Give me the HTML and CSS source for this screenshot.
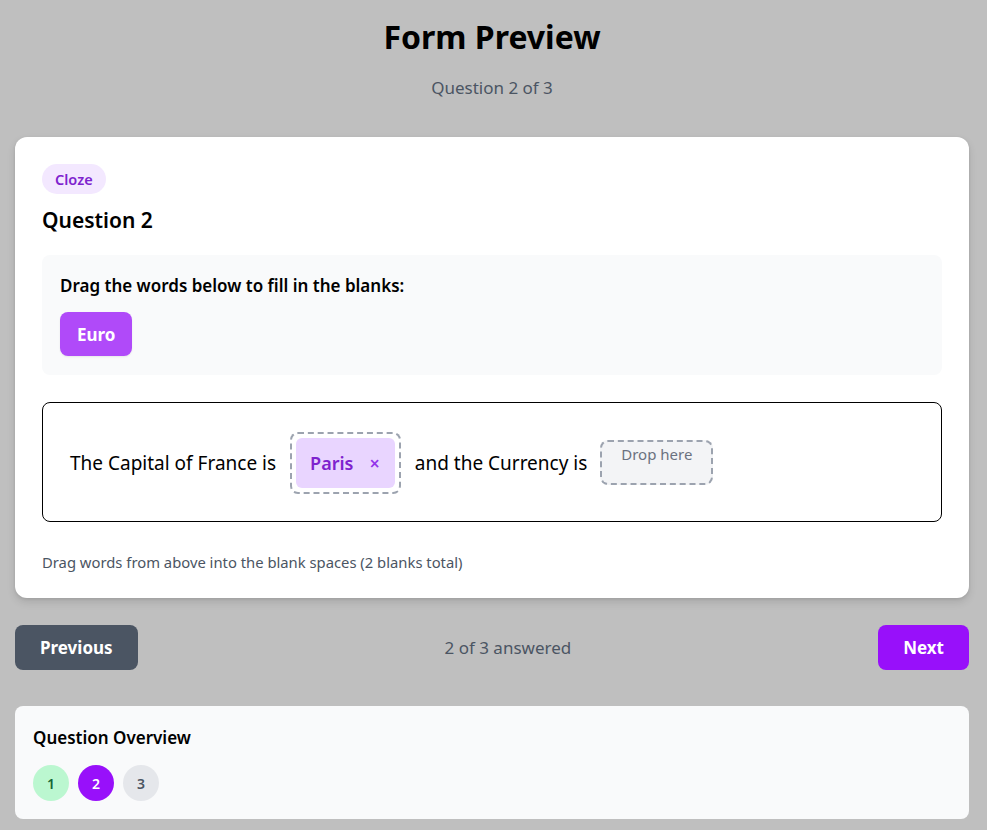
FILE: index.html
```html
<!DOCTYPE html>
<html>
<head>
<meta charset="utf-8">
<link rel="stylesheet" href="styles.css">
</head>
<body>
<div class="page">
  <header class="head">
    <h1 class="title">Form Preview</h1>
    <p class="subtitle">Question 2 of 3</p>
  </header>

  <section class="card">
    <span class="badge">Cloze</span>
    <h2 class="qtitle">Question 2</h2>

    <div class="bank">
      <p class="bank-label">Drag the words below to fill in the blanks:</p>
      <div class="bank-words">
        <span class="word">Euro</span>
      </div>
    </div>

    <div class="sentence">
      <span class="txt">The Capital of France is</span>
      <span class="blank filled"><span class="chip">Paris<span class="x">×</span></span></span>
      <span class="txt">and the Currency is</span>
      <span class="blank empty">Drop here</span>
    </div>

    <p class="hint">Drag words from above into the blank spaces (2 blanks total)</p>
  </section>

  <nav class="nav">
    <button class="btn prev">Previous</button>
    <span class="progress">2 of 3 answered</span>
    <button class="btn next">Next</button>
  </nav>

  <section class="overview">
    <h3 class="ov-title">Question Overview</h3>
    <div class="dots">
      <span class="dot done">1</span>
      <span class="dot current">2</span>
      <span class="dot todo">3</span>
    </div>
  </section>
</div>
</body>
</html>
```

FILE: styles.css
```css
* { box-sizing: border-box; }
html, body { margin: 0; padding: 0; }
body {
  background: #bfbfbf;
  font-family: "Noto Sans", "Open Sans", sans-serif;
  color: #000;
}
.page {
  padding: 0 18px 0 15px;
}
.head {
  text-align: center;
  padding-top: 16px;
}
.title {
  margin: 0;
  font-size: 32px;
  font-weight: 700;
  line-height: 42px;
}
.subtitle {
  margin: 18px 0 0;
  font-size: 17px;
  line-height: 24px;
  color: #4b5563;
}
.card {
  margin-top: 37px;
  background: #fff;
  border-radius: 12px;
  box-shadow: 0 4px 8px rgba(0,0,0,0.12), 0 1px 3px rgba(0,0,0,0.08);
  padding: 27px 27px 26px;
}
.badge {
  display: inline-block;
  background: #f3e8ff;
  color: #7e22ce;
  font-size: 14.5px;
  font-weight: 600;
  line-height: 30px;
  height: 30px;
  padding: 0 13px;
  border-radius: 15px;
}
.qtitle {
  margin: 12px 0 0;
  font-size: 21px;
  font-weight: 600;
  line-height: 28px;
}
.bank {
  margin-top: 21px;
  background: #f9fafb;
  border-radius: 8px;
  padding: 19px 18px 19px;
}
.bank-label {
  margin: 0;
  font-size: 17px;
  font-weight: 600;
  line-height: 24px;
}
.bank-words {
  margin-top: 14px;
  display: flex;
  gap: 8px;
}
.word {
  display: inline-flex;
  align-items: center;
  height: 44px;
  padding: 0 17px;
  background: #b04af9;
  color: #fff;
  border-radius: 8px;
  font-size: 17px;
  font-weight: 700;
  box-shadow: 0 1px 2px rgba(0,0,0,0.08);
}
.sentence {
  margin-top: 27px;
  border: 1px solid #000;
  border-radius: 8px;
  height: 120px;
  padding: 1px 27px 0;
  display: flex;
  align-items: center;
  gap: 14px;
  font-size: 19px;
}
.txt { line-height: 26px; }
.blank {
  border: 2px dashed #9ca3af;
  border-radius: 8px;
}
.blank.filled {
  padding: 4px 4px 4px 4px;
}
.chip {
  display: flex;
  align-items: center;
  height: 50px;
  padding: 0 15px 0 14px;
  background: #e9d5ff;
  color: #7e22ce;
  border-radius: 6px;
  font-weight: 600;
  font-size: 18px;
}
.x {
  margin-left: 16px;
  font-size: 18px;
  color: #9333ea;
}
.blank.empty {
  background: #f3f4f6;
  color: #6b7280;
  font-size: 15px;
  width: 113px;
  height: 45px;
  text-align: center;
  line-height: 22px;
  padding-top: 1px;
  margin-left: -1px;
}
.hint {
  margin: 30px 0 0;
  font-size: 14.8px;
  line-height: 20px;
  color: #4b5563;
}
.nav {
  margin-top: 27px;
  display: flex;
  align-items: center;
  justify-content: space-between;
}
.btn {
  border: 0;
  height: 45px;
  border-radius: 8px;
  color: #fff;
  font-family: inherit;
  font-size: 17px;
  font-weight: 700;
  padding: 0 25px;
}
.prev { background: #4b5563; }
.next { background: #9810fa; }
.progress {
  color: #4b5563;
  font-size: 17px;
}
.overview {
  margin-top: 36px;
  background: #f9fafb;
  border-radius: 8px;
  padding: 20px 18px 18px;
}
.ov-title {
  margin: 0;
  font-size: 17px;
  font-weight: 600;
  line-height: 24px;
}
.dots {
  margin-top: 15px;
  display: flex;
  gap: 9px;
}
.dot {
  width: 36px;
  height: 36px;
  border-radius: 50%;
  display: flex;
  align-items: center;
  justify-content: center;
  font-size: 14px;
  font-weight: 600;
}
.done { background: #bbf7d0; color: #166534; }
.current { background: #9810fa; color: #fff; }
.todo { background: #e5e7eb; color: #4b5563; }
```
